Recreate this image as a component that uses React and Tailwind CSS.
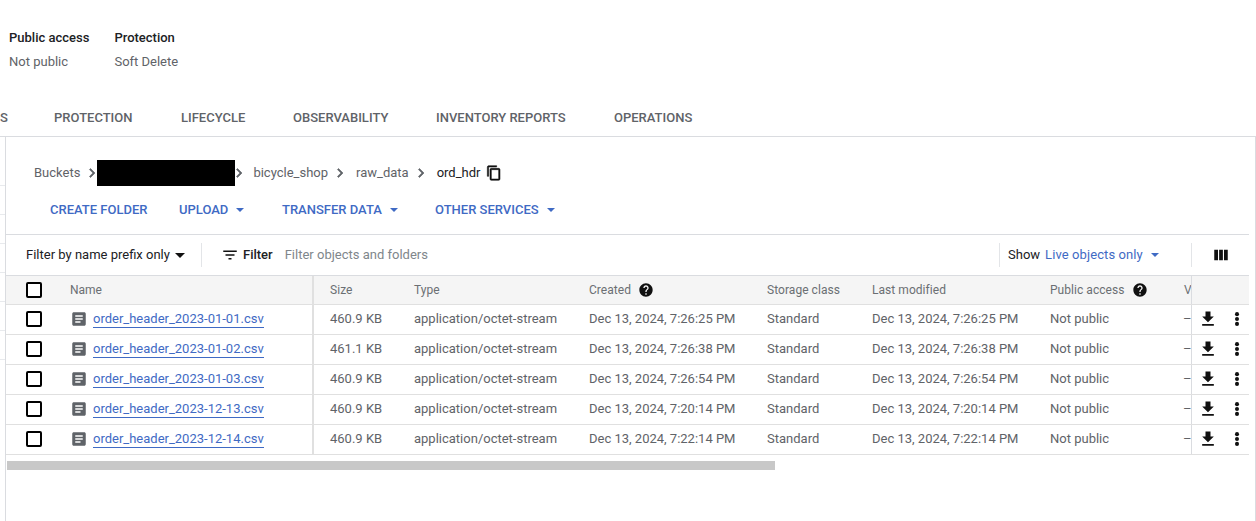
const font = { fontFamily: 'Roboto, sans-serif' };

const rows = [
  ['order_header_2023-01-01.csv', '460.9 KB', 'Dec 13, 2024, 7:26:25 PM'],
  ['order_header_2023-01-02.csv', '461.1 KB', 'Dec 13, 2024, 7:26:38 PM'],
  ['order_header_2023-01-03.csv', '460.9 KB', 'Dec 13, 2024, 7:26:54 PM'],
  ['order_header_2023-12-13.csv', '460.9 KB', 'Dec 13, 2024, 7:20:14 PM'],
  ['order_header_2023-12-14.csv', '460.9 KB', 'Dec 13, 2024, 7:22:14 PM'],
];

function Chevron() {
  return (
    <svg width="18" height="18" viewBox="0 0 24 24" className="shrink-0 fill-[#5f6368] stroke-[#5f6368] stroke-[0.8]">
      <path d="M10 6 8.6 7.4 13.2 12l-4.6 4.6L10 18l6-6z" />
    </svg>
  );
}

function Caret({ className, w = 8, h = 4 }) {
  return (
    <svg width={w} height={h} viewBox="0 0 10 5" preserveAspectRatio="none" className={className}>
      <path d="M0 0h10L5 5z" fill="currentColor" />
    </svg>
  );
}

function Help() {
  return (
    <svg width="16" height="16" viewBox="0 0 24 24" className="shrink-0">
      <path
        fill="#111"
        d="M12 2C6.48 2 2 6.48 2 12s4.48 10 10 10 10-4.48 10-10S17.52 2 12 2zm1 17h-2v-2h2v2zm2.07-7.75-.9.92C13.45 12.9 13 13.5 13 15h-2v-.5c0-1.1.45-2.1 1.17-2.83l1.24-1.26c.37-.36.59-.86.59-1.41 0-1.1-.9-2-2-2s-2 .9-2 2H8c0-2.21 1.79-4 4-4s4 1.79 4 4c0 .88-.36 1.68-.93 2.25z"
      />
    </svg>
  );
}

function Check() {
  return <div className="h-[16px] w-[16px] rounded-[2px] border-2 border-black bg-white" />;
}

function FileIcon() {
  return (
    <svg width="18" height="18" viewBox="0 0 24 24" className="shrink-0">
      <path
        fill="#5f6368"
        d="M19 3H5c-1.1 0-2 .9-2 2v14c0 1.1.9 2 2 2h14c1.1 0 2-.9 2-2V5c0-1.1-.9-2-2-2zm-5 14H7v-2h7v2zm3-4H7v-2h10v2zm0-4H7V7h10v2z"
      />
    </svg>
  );
}

function MenuBtn({ label, w }) {
  return (
    <div className={`flex items-center ${w}`}>
      <span>{label}</span>
      <Caret className="ml-[8px] text-[#3f6ac4]" />
    </div>
  );
}

export default function App() {
  return (
    <div style={font} className="relative flex h-[521px] w-[1256px] flex-col overflow-hidden bg-white text-[13px] text-[#5f6368]">
      <div className="flex h-[84px] gap-[25px] pl-[9px] pt-[29px] leading-[17px]">
        <div className="flex flex-col gap-[7px]">
          <div className="font-medium text-[#202124]">Public access</div>
          <div>Not public</div>
        </div>
        <div className="flex flex-col gap-[7px]">
          <div className="font-medium text-[#202124]">Protection</div>
          <div>Soft Delete</div>
        </div>
      </div>

      <div className="flex h-[53px] items-center border-b border-[#dadce0] pt-[15px] font-medium">
        <span className="w-[54px] text-[#5f6368]">S</span>
        <span className="w-[127px]">PROTECTION</span>
        <span className="w-[112px]">LIFECYCLE</span>
        <span className="w-[143px]">OBSERVABILITY</span>
        <span className="w-[178px]">INVENTORY REPORTS</span>
        <span>OPERATIONS</span>
      </div>

      <div className="flex min-h-0 flex-1">
        <div className="flex w-[6px] shrink-0 flex-col border-r border-[#dadce0] pt-[48px]">
          <div className="h-[29px] shrink-0 border-t border-[#e8eaed]" />
          <div className="h-[29px] shrink-0 border-t border-[#e8eaed]" />
          <div className="h-[29px] shrink-0 border-t border-[#e8eaed]" />
          <div className="h-[29px] shrink-0 border-t border-[#e8eaed]" />
          <div className="h-[29px] shrink-0 border-t border-[#e8eaed]" />
          <div className="h-[29px] shrink-0 border-t border-[#e8eaed]" />
          <div className="h-[29px] shrink-0 border-t border-[#e8eaed]" />
        </div>

        <div className="flex w-[1243px] shrink-0 flex-col">
          <div className="flex h-[59px] items-center pl-[28px] pt-[13px]">
            <span>Buckets</span>
            <div className="ml-[3px] flex items-center">
              <Chevron />
            </div>
            <div className="relative -ml-[4px] h-[26px] w-[138px] bg-black" />
            <div className="-ml-[5px] flex items-center">
              <Chevron />
            </div>
            <span className="ml-[5px]">bicycle_shop</span>
            <div className="ml-[3px]"><Chevron /></div>
            <span className="ml-[7px]">raw_data</span>
            <div className="ml-[3px]"><Chevron /></div>
            <span className="ml-[7px] text-[#202124]">ord_hdr</span>
            <svg width="16" height="16" viewBox="0 0 24 24" className="ml-[6px] fill-[#111] stroke-[#111] stroke-[0.8]">
              <path d="M16 1H4c-1.1 0-2 .9-2 2v14h2V3h12V1zm3 4H8c-1.1 0-2 .9-2 2v14c0 1.1.9 2 2 2h11c1.1 0 2-.9 2-2V7c0-1.1-.9-2-2-2zm0 16H8V7h11v14z" />
            </svg>
          </div>

          <div className="flex h-[26px] items-center pl-[44px] pt-[2px] font-medium text-[#3f6ac4]">
            <span className="w-[129px]">CREATE FOLDER</span>
            <MenuBtn label="UPLOAD" w="w-[103px]" />
            <MenuBtn label="TRANSFER DATA" w="w-[153px]" />
            <MenuBtn label="OTHER SERVICES" w="" />
          </div>

          <div className="mt-[12px] flex h-[41px] items-center border-t border-[#dadce0]">
            <div className="flex w-[195px] items-center pl-[20px] text-[#202124]">
              <span>Filter by name prefix only</span>
              <Caret w={10} h={5} className="ml-[5px] text-[#111]" />
            </div>
            <div className="h-[24px] w-px bg-[#e3e5e8]" />
            <svg width="18" height="18" viewBox="0 0 24 24" className="ml-[19px] fill-[#111]">
              <path d="M10 18h4v-2h-4v2zM3 6v2h18V6H3zm3 7h12v-2H6v2z" />
            </svg>
            <span className="ml-[4px] font-medium text-[#202124]">Filter</span>
            <span className="ml-[12px] flex-1 text-[#80868b]">Filter objects and folders</span>
            <div className="flex h-[24px] w-[193px] items-center border-l border-[#e3e5e8] pl-[8px]">
              <span className="text-[#202124]">Show</span>
              <span className="ml-[5px] tracking-[0.1px] text-[#3f6ac4]">Live objects only</span>
              <Caret className="ml-[8px] text-[#3f6ac4]" />
              <div className="ml-auto h-[24px] w-px bg-[#e3e5e8]" />
            </div>
            <div className="flex w-[57px] justify-center">
              <svg width="18" height="18" viewBox="0 0 24 24" className="fill-[#111]">
                <path d="M3 5h5v14H3zM9.5 5h5v14h-5zM16 5h5v14h-5z" />
              </svg>
            </div>
          </div>

          <div className="flex flex-col border-t border-[#dadce0]">
            <div className="flex h-[28px] items-center bg-[#f5f5f5]">
              <div className="flex h-full w-[308px] shrink-0 items-center border-r-2 border-[#e0e0e0]">
                <div className="flex w-[64px] justify-center pr-[8px]"><Check /></div>
                <span className="text-[12px] text-[#6b6f73]">Name</span>
              </div>
              <div className="flex h-full min-w-0 flex-1 items-center overflow-hidden text-[12px] tracking-[0.05px] text-[#6b6f73]">
                <span className="w-[100px] shrink-0 pl-[16px]">Size</span>
                <span className="w-[175px] shrink-0">Type</span>
                <span className="flex w-[178px] shrink-0 items-center gap-[7px]">Created <Help /></span>
                <span className="w-[105px] shrink-0">Storage class</span>
                <span className="w-[178px] shrink-0">Last modified</span>
                <span className="flex w-[134px] shrink-0 items-center gap-[7px]">Public access <Help /></span>
                <span className="shrink-0">V</span>
              </div>
              <div className="h-full w-[58px] shrink-0 border-l border-[#dadce0] bg-[#f5f5f5]" />
            </div>

            {rows.map(([name, size, date]) => (
              <div key={name} className="flex h-[30px] items-center border-t border-[#e0e0e0]">
                <div className="flex h-full w-[308px] shrink-0 items-center border-r-2 border-[#e0e0e0] pb-[2px]">
                  <div className="flex w-[64px] shrink-0 justify-center pr-[8px]"><Check /></div>
                  <FileIcon />
                  <span className="ml-[5px] border-b border-[#3f6ac4] leading-[17px] text-[#3f6ac4]">{name}</span>
                </div>
                <div className="flex h-full min-w-0 flex-1 items-center overflow-hidden pb-[2px]">
                  <span className="w-[100px] shrink-0 pl-[16px]">{size}</span>
                  <span className="w-[175px] shrink-0">application/octet-stream</span>
                  <span className="w-[178px] shrink-0">{date}</span>
                  <span className="w-[105px] shrink-0">Standard</span>
                  <span className="w-[178px] shrink-0">{date}</span>
                  <span className="w-[133px] shrink-0">Not public</span>
                  <span className="shrink-0">–</span>
                </div>
                <div className="flex h-full w-[58px] shrink-0 items-center border-l border-[#dadce0] pb-[2px] pl-[6px]">
                  <svg width="20" height="20" viewBox="0 0 24 24" className="fill-[#111]">
                    <path d="M19 9h-4V3H9v6H5l7 7 7-7zM5 18v2h14v-2H5z" />
                  </svg>
                  <svg width="18" height="18" viewBox="0 0 24 24" className="ml-[10px] fill-[#111]">
                    <circle cx="12" cy="5.5" r="2.7" />
                    <circle cx="12" cy="12" r="2.7" />
                    <circle cx="12" cy="18.5" r="2.7" />
                  </svg>
                </div>
              </div>
            ))}
            <div className="border-t border-[#e0e0e0]" />
            <div className="ml-[1px] mt-[6px] h-[9px] w-[768px] bg-[#c8c8c8]" />
          </div>
        </div>

        <div className="ml-auto w-px bg-[#dadce0]" />
      </div>
    </div>
  );
}
